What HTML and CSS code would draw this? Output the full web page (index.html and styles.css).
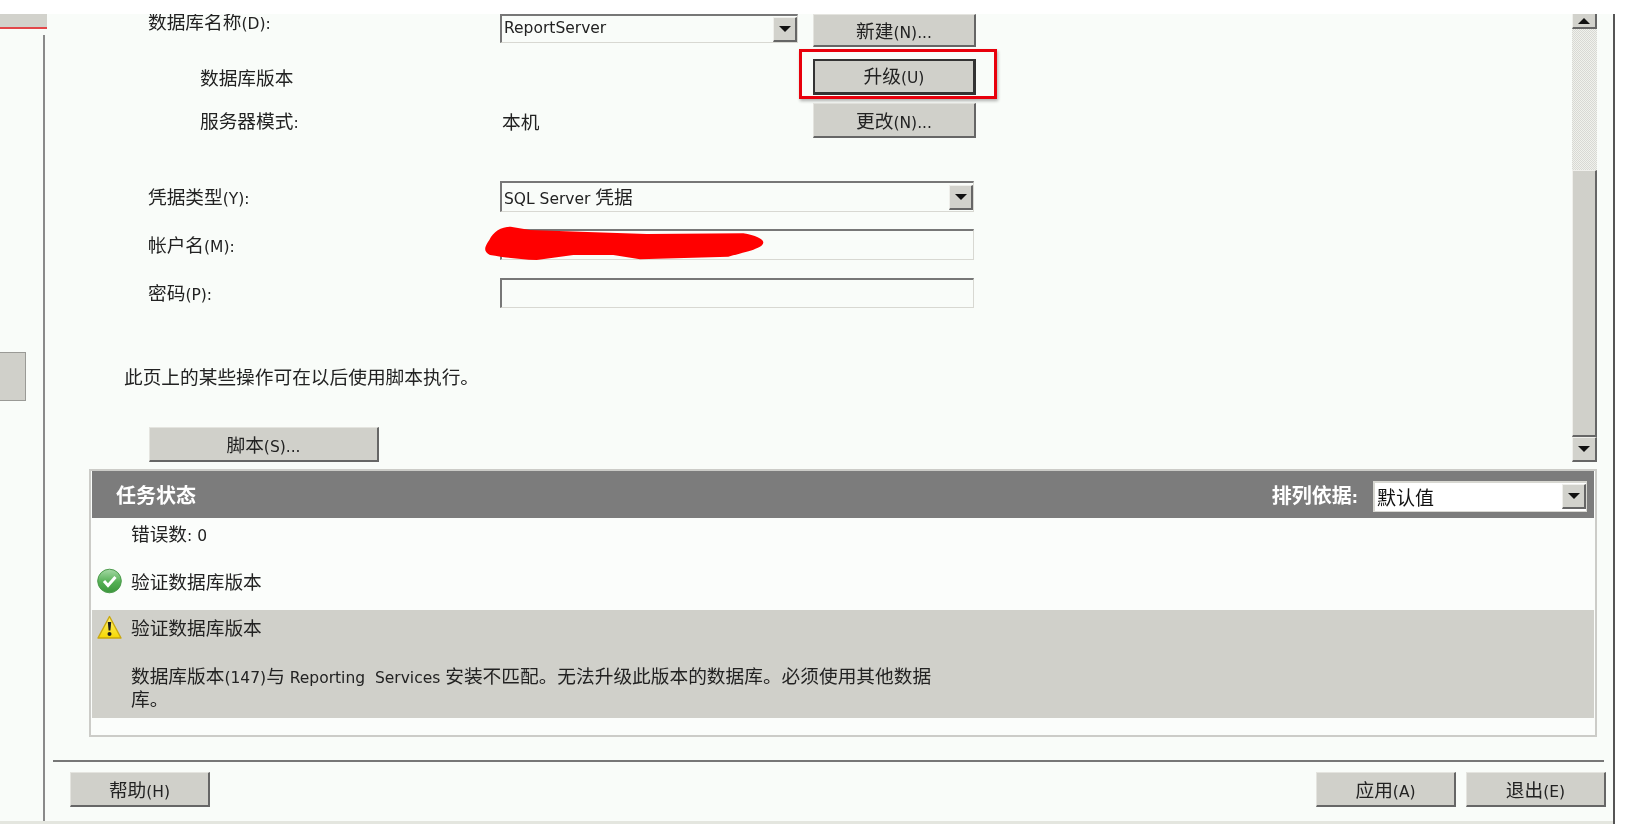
FILE: index.html
```html
<!DOCTYPE html>
<html lang="zh-CN">
<head>
    <meta charset="UTF-8">
    <title>Reporting Services</title>
    <link rel="stylesheet" href="styles.css">
</head>
<body>
    <div class="top-band"></div>

    <div class="window">
        <div class="panes">
            <!-- Linke Navigation -->
            <div class="sidebar">
                <div class="side-tab"></div>
                <div class="side-body">
                    <div class="side-item"></div>
                </div>
            </div>

            <div class="main">
                <div class="upper">
                    <div class="form">
                        <div class="row row-first">
                            <div class="label">数据库名称<span class="lat">(D):</span></div>
                            <div class="select select-short">
                                <span class="select-text lat">ReportServer</span>
                                <span class="arrow-btn"><i class="arrow-down"></i></span>
                            </div>
                            <button class="btn btn-side">新建<span class="lat">(N)...</span></button>
                        </div>

                        <div class="row row-upgrade">
                            <div class="label label-indent">数据库版本</div>
                            <div class="value"></div>
                            <div class="btn-wrap">
                                <button class="btn btn-side btn-default">升级<span class="lat">(U)</span></button>
                                <div class="highlight"></div>
                            </div>
                        </div>

                        <div class="row row-mode">
                            <div class="label label-indent">服务器模式<span class="lat">:</span></div>
                            <div class="value">本机</div>
                            <button class="btn btn-side">更改<span class="lat">(N)...</span></button>
                        </div>

                        <div class="row row-cred">
                            <div class="label">凭据类型<span class="lat">(Y):</span></div>
                            <div class="select select-long">
                                <span class="select-text"><span class="lat">SQL Server </span>凭据</span>
                                <span class="arrow-btn"><i class="arrow-down"></i></span>
                            </div>
                        </div>

                        <div class="row row-user">
                            <div class="label">帐户名<span class="lat">(M):</span></div>
                            <div class="input">
                                <svg class="scribble" width="290" height="38" viewBox="12 678 870 114">
                                    <path d="M28 720 C40 695 62 680 92 680 L150 690 L300 695 L500 702 L790 700 C825 706 850 716 850 728 C846 745 810 752 745 770 L480 778 L400 765 L280 765 L170 780 C120 778 70 772 30 765 C12 755 10 745 28 720 Z" fill="#ff0000"/>
                                </svg>
                            </div>
                        </div>

                        <div class="row row-pass">
                            <div class="label">密码<span class="lat">(P):</span></div>
                            <div class="input"></div>
                        </div>

                        <p class="note">此页上的某些操作可在以后使用脚本执行。</p>
                        <button class="btn btn-script">脚本<span class="lat">(S)...</span></button>
                    </div>

                    <div class="scrollbar">
                        <div class="scroll-btn scroll-btn-top"><i class="arrow-up"></i></div>
                        <div class="scroll-track"></div>
                        <div class="scroll-thumb"></div>
                        <div class="scroll-btn scroll-btn-bottom"><i class="arrow-down"></i></div>
                    </div>
                </div>

                <!-- Aufgabenstatus -->
                <div class="panel">
                    <div class="panel-head">
                        <span class="panel-title">任务状态</span>
                        <div class="sort">
                            <span class="panel-title">排列依据<span class="lat">:</span></span>
                            <div class="select select-sort">
                                <span class="select-text">默认值</span>
                                <span class="arrow-btn"><i class="arrow-down"></i></span>
                            </div>
                        </div>
                    </div>

                    <div class="error-count">错误数<span class="lat">: 0</span></div>

                    <div class="task">
                        <svg class="task-icon" width="25" height="26" viewBox="0 0 25 26">
                            <defs>
                                <linearGradient id="okFill" x1="0" y1="0" x2="0" y2="1">
                                    <stop offset="0" stop-color="#a5d9a5"/>
                                    <stop offset="0.55" stop-color="#55b055"/>
                                    <stop offset="1" stop-color="#3c963c"/>
                                </linearGradient>
                            </defs>
                            <circle cx="12.5" cy="13" r="11.8" fill="url(#okFill)" stroke="#4a9a4a"/>
                            <path d="M7 13 L11 17.5 L18.5 9" fill="none" stroke="#ffffff" stroke-width="3"/>
                        </svg>
                        <span>验证数据库版本</span>
                    </div>

                    <div class="task-warn">
                        <div class="task task-first">
                            <svg class="task-icon" width="25" height="24" viewBox="0 0 25 24">
                                <defs>
                                    <linearGradient id="warnFill" x1="0" y1="0" x2="0" y2="1">
                                        <stop offset="0" stop-color="#fff27a"/>
                                        <stop offset="1" stop-color="#f6d800"/>
                                    </linearGradient>
                                </defs>
                                <path d="M12.5 1.5 L24 23 H1 Z" fill="url(#warnFill)" stroke="#c9a80e" stroke-width="1.4" stroke-linejoin="round"/>
                                <path d="M10.8 7 H14.2 L13.4 15.5 H11.6 Z" fill="#1c1c1c"/>
                                <circle cx="12.5" cy="19" r="2" fill="#1c1c1c"/>
                            </svg>
                            <span>验证数据库版本</span>
                        </div>
                        <p class="message">数据库版本<span class="lat">(147)</span>与<span class="lat lat-wide"> Reporting  Services </span>安装不匹配。无法升级此版本的数据库。必须使用其他数据<br>库。</p>
                    </div>
                </div>

                <div class="rule"></div>

                <div class="footer">
                    <button class="btn btn-foot">帮助<span class="lat">(H)</span></button>
                    <div class="footer-right">
                        <button class="btn btn-foot">应用<span class="lat">(A)</span></button>
                        <button class="btn btn-foot">退出<span class="lat">(E)</span></button>
                    </div>
                </div>
            </div>
        </div>
        <div class="strip"></div>
    </div>
</body>
</html>
```

FILE: styles.css
```css
/* Grundlayout */
html, body {
    margin: 0;
    padding: 0;
    height: 830px;
    overflow: hidden;
    background-color: #ffffff;
}

body {
    font-family: "Noto Sans CJK SC", "Noto Sans", sans-serif;
    font-size: 18.7px;
    color: #222;
    filter: blur(0.5px);
}

.lat {
    font-family: "DejaVu Sans", sans-serif;
    font-size: 15.5px;
    line-height: 1;
}

.lat-wide {
    white-space: pre;
}

.top-band {
    position: relative;
    z-index: 1;
    height: 14px;
    background-color: #ffffff;
}

.window {
    height: 810px;
    margin-right: 12px;
    border-right: 2px solid #555;
    background-color: #f9fcf9;
    display: flex;
    flex-direction: column;
}

.panes {
    flex: 1;
    display: flex;
    min-height: 0;
}

.strip {
    height: 3px;
    background-color: #e4e6df;
}

/* Sidebar */
.sidebar {
    width: 45px;
    flex-shrink: 0;
    display: flex;
    flex-direction: column;
}

.side-tab {
    height: 13px;
    width: 47px;
    background-color: #d2d2cc;
    border-bottom: 2px solid #e2474a;
}

.side-body {
    flex: 1;
    margin-top: 6px;
    border-right: 2px solid #8a8a8a;
}

.side-item {
    width: 26px;
    height: 49px;
    margin-top: 317px;
    background-color: #d0d0ca;
    border: 1px solid #9a9a96;
    border-left: none;
    box-sizing: border-box;
}

/* Hauptbereich */
.main {
    flex: 1;
    display: flex;
    flex-direction: column;
    min-width: 0;
}

.upper {
    height: 448px;
    display: flex;
    margin-right: 16px;
}

.form {
    flex: 1;
    padding-left: 80px;
}

.row {
    display: flex;
    align-items: center;
    padding-left: 23px;
}

.row-first {
    height: 33px;
    align-items: flex-start;
}

.row-first .label {
    margin-top: -3px;
}

.row-upgrade {
    height: 36px;
    margin-top: 12px;
}

.row-mode {
    height: 35px;
    margin-top: 8px;
}

.row-cred {
    height: 31px;
    margin-top: 43px;
}

.row-user {
    height: 31px;
    margin-top: 17px;
}

.row-pass {
    height: 30px;
    margin-top: 18px;
}

.label {
    width: 352px;
    flex-shrink: 0;
    line-height: 20px;
    box-sizing: border-box;
}

.label-indent {
    padding-left: 52px;
}

.value {
    width: 313px;
    flex-shrink: 0;
    padding-left: 2px;
    box-sizing: border-box;
}

/* Eingabefelder */
.select, .input {
    box-sizing: border-box;
    display: flex;
    align-items: center;
    justify-content: space-between;
    border-top: 2px solid #777;
    border-left: 2px solid #777;
    border-right: 1px solid #d8d8d2;
    border-bottom: 1px solid #d8d8d2;
    background-color: #f9fcf9;
}

.select-short {
    width: 298px;
    height: 29px;
    margin-right: 15px;
}

.select-long, .input {
    width: 474px;
    height: 100%;
}

.input {
    position: relative;
}

.select-text {
    padding-left: 2px;
    white-space: nowrap;
}

.select-long .select-text {
    padding-bottom: 3px;
}

.select-sort {
    width: 214px;
    height: 31px;
    margin-top: 3px;
    background-color: #ffffff;
    border-color: #d8d8d2;
    color: #111;
}

.select-sort .select-text {
    font-size: 19px;
}

.arrow-btn {
    width: 24px;
    height: 25px;
    flex-shrink: 0;
    display: flex;
    align-items: center;
    justify-content: center;
    box-sizing: border-box;
    background-color: #d2d2cc;
    border-top: 1px solid #efefeb;
    border-left: 1px solid #efefeb;
    border-right: 2px solid #666;
    border-bottom: 2px solid #666;
}

.arrow-down {
    width: 0;
    height: 0;
    border-left: 6px solid transparent;
    border-right: 6px solid transparent;
    border-top: 6px solid #111;
}

.arrow-up {
    width: 0;
    height: 0;
    border-left: 6px solid transparent;
    border-right: 6px solid transparent;
    border-bottom: 6px solid #111;
}

.scribble {
    position: absolute;
    left: -18px;
    top: -5px;
}

/* Buttons */
.btn {
    box-sizing: border-box;
    font-family: inherit;
    font-size: 18.7px;
    color: #222;
    padding: 0 0 2px 0;
    background-color: #d0d0ca;
    border-top: 1px solid #e4e4df;
    border-left: 1px solid #e4e4df;
    border-right: 2px solid #666;
    border-bottom: 2px solid #666;
}

.btn-side {
    width: 163px;
    height: 100%;
}

.btn-default {
    padding-bottom: 5px;
    border: 2px solid #333;
    border-right-width: 3px;
    border-bottom-width: 3px;
}

.btn-wrap {
    position: relative;
    height: 100%;
}

.highlight {
    position: absolute;
    top: -10px;
    left: -14px;
    right: -21px;
    bottom: -4px;
    border: 3px solid #e8000c;
    box-shadow: 1px 2px 3px rgba(0, 0, 0, 0.3);
}

.note {
    margin: 56px 0 0 -1px;
    line-height: 24px;
}

.btn-script {
    display: block;
    width: 230px;
    height: 35px;
    margin: 39px 0 0 24px;
}

.btn-foot {
    width: 140px;
    height: 35px;
}

/* Scrollbar */
.scrollbar {
    width: 25px;
    flex-shrink: 0;
    display: flex;
    flex-direction: column;
}

.scroll-btn {
    box-sizing: border-box;
    background-color: #d2d2cc;
    border-right: 2px solid #666;
    border-bottom: 2px solid #666;
    border-left: 1px solid #efefeb;
    display: flex;
    align-items: center;
    justify-content: center;
}

.scroll-btn-top {
    height: 15px;
}

.scroll-btn-bottom {
    height: 25px;
    border-top: 1px solid #efefeb;
}

.scroll-track {
    height: 141px;
    background-image: repeating-conic-gradient(#d8d8d4 0 25%, #f0f2ec 0 50%);
    background-size: 2px 2px;
}

.scroll-thumb {
    box-sizing: border-box;
    height: 267px;
    background-color: #d0d0ca;
    border-top: 1px solid #efefeb;
    border-left: 1px solid #efefeb;
    border-right: 2px solid #666;
    border-bottom: 2px solid #666;
}

/* Aufgabenstatus */
.panel {
    box-sizing: border-box;
    height: 268px;
    margin: 7px 16px 0 44px;
    padding: 0 1px;
    border: 2px solid #ccccc8;
    background-color: #fbfdfb;
}

.panel-head {
    height: 47px;
    display: flex;
    align-items: center;
    justify-content: space-between;
    padding: 0 7px 0 24px;
    background-color: #7c7c7c;
}

.panel-title {
    color: #ffffff;
    font-size: 20px;
    font-weight: bold;
}

.sort {
    display: flex;
    align-items: center;
    gap: 15px;
}

.error-count {
    padding: 3px 0 0 39px;
    line-height: 24px;
}

.task {
    display: flex;
    align-items: center;
    gap: 9px;
    margin-top: 23px;
    padding-left: 5px;
    line-height: 26px;
}

.task-icon {
    flex-shrink: 0;
}

.task-warn {
    margin-top: 16px;
    padding: 5px 0 10px 0;
    background-color: #d0d0ca;
}

.task-first {
    margin-top: 0;
    line-height: 24px;
}

.message {
    margin: 25px 0 0 39px;
    line-height: 21px;
    white-space: nowrap;
}

.rule {
    margin: 23px 9px 0 8px;
    border-top: 2px solid #777;
}

.footer {
    display: flex;
    justify-content: space-between;
    margin: 10px 7px 0 25px;
}

.footer-right {
    display: flex;
    gap: 10px;
}
```
